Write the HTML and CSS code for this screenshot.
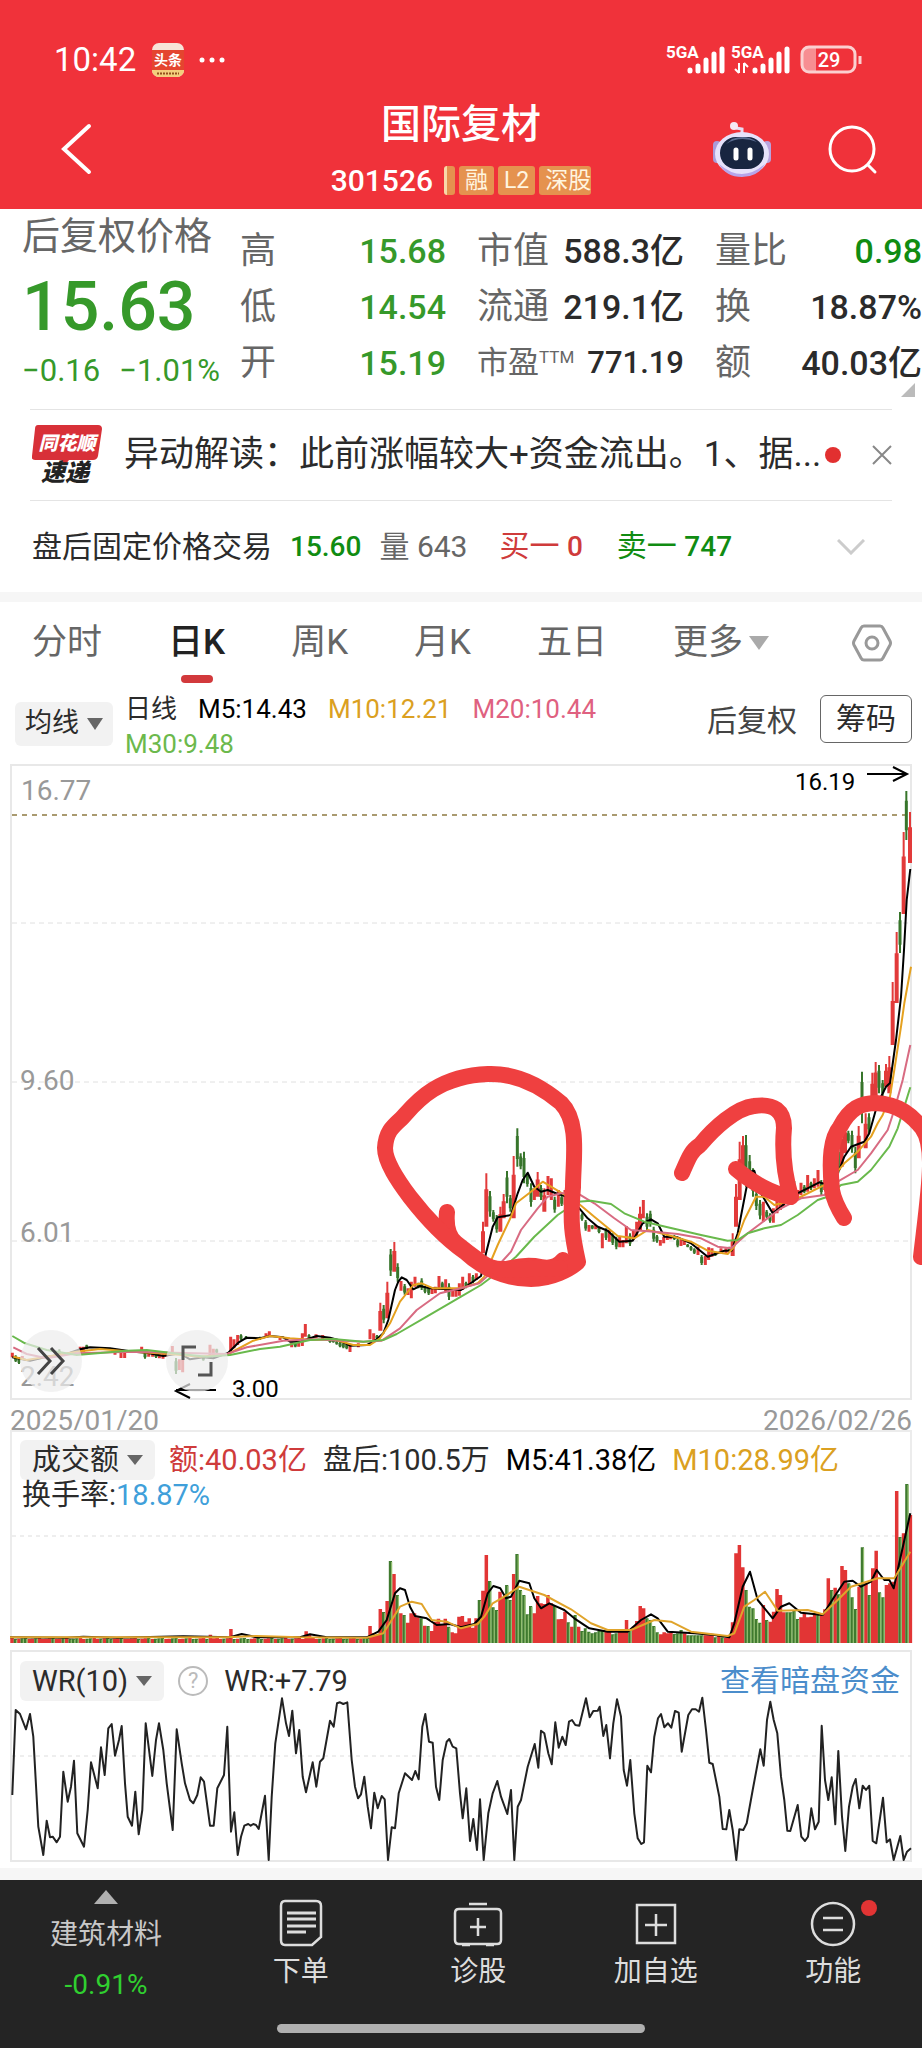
FILE: index.html
```html
<!DOCTYPE html>
<html lang="zh-CN">
<head>
<meta charset="utf-8">
<meta name="viewport" content="width=device-width, initial-scale=1">
<title>国际复材 301526</title>
<link rel="stylesheet" href="styles.css">
</head>
<body>
<header class="top">
  <div class="status">
    <span class="clock">10:42</span>
    <svg class="app-badge" width="32" height="34" viewBox="0 0 32 34"><rect width="32" height="34" rx="7" fill="#f7e4d8"/><rect y="7" width="32" height="20" fill="#e4452f"/><path d="M0 27h32a7 7 0 0 1-7 7H7a7 7 0 0 1-7-7z" fill="#f3cf7c"/><path d="M5 30.500h22" stroke="#94501c" stroke-width="2" stroke-dasharray="2 1"/><text x="16" y="22" text-anchor="middle" font-size="14" font-weight="700" fill="#fff">头条</text></svg>
    <svg width="28" height="8" viewBox="0 0 28 8" fill="#fff"><circle cx="4" cy="4" r="2.500"/><circle cx="14" cy="4" r="2.500"/><circle cx="24" cy="4" r="2.500"/></svg>
    <svg class="signals" width="198" height="34" viewBox="0 0 198 34" fill="#fff">
      <g font-size="17" font-weight="700"><text x="0" y="15">5GA</text><text x="65" y="15">5GA</text></g>
      <g stroke="#fff" stroke-width="5" stroke-linecap="round"><path d="M24 27v1M32 23v5M40 17v11M48 11v17M56 6v22M89 27v1M97 23v5M105 17v11M113 11v17M121 6v22" /></g>
      <path d="M73 20v10M73 30l-4-4M78 30V20M78 20l4 4" fill="none" stroke="#fff" stroke-width="2"/>
      <path d="M142 5h8v24h-8q-6 0-6-6V11q0-6 6-6z" fill="#fff" opacity=".45"/>
      <rect x="136" y="4" width="53" height="25" rx="7" fill="none" stroke="#fbd0d0" stroke-width="3"/><path d="M194 13v8" stroke="#fbd0d0" stroke-width="3"/>
      <text x="163" y="24" text-anchor="middle" font-size="20" font-weight="500">29</text>
    </svg>
  </div>
  <nav class="nav">
    <button class="icon-btn back" aria-label="返回"><svg width="36" height="56" viewBox="0 0 36 56" fill="none" stroke="#fff" stroke-width="4" stroke-linecap="round"><path d="M31 5L6 28l25 23"/></svg></button>
    <div class="title">
      <h1>国际复材</h1>
      <div class="code"><span>301526</span><i class="tag tag-cut"></i><i class="tag">融</i><i class="tag">L2</i><i class="tag">深股</i></div>
    </div>
    <div class="nav-right">
      <button class="icon-btn" aria-label="智能助手"><svg width="60" height="60" viewBox="0 0 60 60"><path d="M30 16v-6l-6-1" fill="none" stroke="#e8dcf2" stroke-width="3"/><circle cx="22" cy="7" r="4" fill="#f5e8f4"/><rect x="1" y="22" width="8" height="22" rx="4" fill="#aa9bd8"/><rect x="51" y="22" width="8" height="22" rx="4" fill="#b9a3de"/><ellipse cx="30" cy="35" rx="27" ry="22" fill="#e6e2fb"/><path d="M7 45q23 20 46 0-7 13-23 13T7 45z" fill="#b7a5ea"/><rect x="8" y="18" width="44" height="32" rx="16" fill="#182540"/><path d="M14 25q14-9 31-2-11-8-25-3z" fill="#5b6d91"/><path d="M24 31v8M38 31v8" stroke="#fff" stroke-width="5" stroke-linecap="round"/></svg></button>
      <button class="icon-btn" aria-label="搜索"><svg width="52" height="52" viewBox="0 0 52 52" fill="none" stroke="#fff" stroke-width="3" stroke-linecap="round"><circle cx="26" cy="26" r="22"/><path d="M42 42l7 7"/></svg></button>
    </div>
  </nav>
</header>

<main>
<section class="quote">
  <div class="price-col">
    <div class="adj">后复权价格</div>
    <div class="price">15.63</div>
    <div class="change"><span>−0.16</span><span>−1.01%</span></div>
  </div>
  <dl class="pairs green"><div><dt>高</dt><dd>15.68</dd></div><div><dt>低</dt><dd>14.54</dd></div><div><dt>开</dt><dd>15.19</dd></div></dl>
  <dl class="pairs"><div><dt>市值</dt><dd>588.3亿</dd></div><div><dt>流通</dt><dd>219.1亿</dd></div><div class="small"><dt>市盈<sup>TTM</sup></dt><dd>771.19</dd></div></dl>
  <dl class="pairs"><div><dt>量比</dt><dd class="bright">0.98</dd></div><div><dt>换</dt><dd>18.87%</dd></div><div><dt>额</dt><dd>40.03亿</dd></div></dl>
  <svg class="corner" width="14" height="14" viewBox="0 0 14 14"><path d="M14 0v14H0z" fill="#bbb"/></svg>
</section>

<section class="news">
  <svg class="brand" width="70" height="64" viewBox="0 0 70 64"><path d="M6 2h60q4 0 4 4l-4 27q-1 4-5 4H37l-4 5-4-5H3q-4 0-3-4L3 6q0-4 3-4z" fill="#d83038"/><g font-weight="900" font-style="italic"><text x="35" y="27" text-anchor="middle" font-size="19" fill="#fff">同花顺</text><text x="33" y="58" text-anchor="middle" font-size="24" fill="#222">速递</text></g></svg>
  <a href="#" class="headline">异动解读：此前涨幅较大+资金流出。1、据...</a>
  <span class="dot"></span>
  <button class="icon-btn close" aria-label="关闭"><svg width="20" height="20" viewBox="0 0 20 20" stroke="#888" stroke-width="2"><path d="M1 1l18 18M19 1L1 19"/></svg></button>
</section>

<section class="after">
  <span>盘后固定价格交易</span><b class="bright">15.60</b><span class="grey">量 643</span><span class="red">买一 <b>0</b></span><span class="bright">卖一 <b>747</b></span>
  <button class="icon-btn expand" aria-label="展开"><svg width="28" height="16" viewBox="0 0 28 16" fill="none" stroke="#ccc" stroke-width="3"><path d="M1 1l13 13L27 1"/></svg></button>
</section>

<div class="tabs" role="tablist">
  <button role="tab">分时</button><button role="tab" class="on" aria-selected="true">日K</button><button role="tab">周K</button><button role="tab">月K</button><button role="tab">五日</button><button role="tab" class="more">更多<svg width="20" height="16" viewBox="0 0 20 16"><path d="M0 1h20L10 15z" fill="#aaa"/></svg></button>
  <button class="gear" aria-label="设置"><svg width="40" height="38" viewBox="0 0 40 38" fill="none" stroke="#999" stroke-width="3"><path d="M12 2h16q2 0 3 2l7 13q1 2 0 4l-7 13q-1 2-3 2H12q-2 0-3-2L2 21q-1-2 0-4L9 4q1-2 3-2z"/><circle cx="20" cy="19" r="6"/></svg></button>
</div>

<div class="ma">
  <button class="pill">均线<svg width="16" height="12" viewBox="0 0 16 12"><path d="M0 0h16L8 12z" fill="#666"/></svg></button>
  <p class="ma-values"><span>日线</span><span class="black">M5:14.43</span><span class="gold">M10:12.21</span><span class="pink">M20:10.44</span><br><span class="lime">M30:9.48</span></p>
  <span class="fq">后复权</span>
  <button class="chip">筹码</button>
</div>

<section class="stack">
  <svg class="chart" id="price" viewBox="0 762 922 642">
    <path d="M11 765H911V1399H11z" fill="none" stroke="#e8e8e8" stroke-width="2"/>
    <path d="M12 923H911M12 1082H911M12 1241H911" stroke="#e0e0e0" stroke-dasharray="5 4"/>
    <path d="M12 815H911" stroke="#a99a70" stroke-width="2" stroke-dasharray="5 5"/>
    <g font-size="28" fill="#999"><text x="21" y="800">16.77</text><text x="20" y="1090">9.60</text><text x="20" y="1242">6.01</text><text x="20" y="1386">2.42</text></g>
    <path id="candle-up" fill="#e23a3a"/><path id="candle-down" fill="#37752b"/>
    <g id="averages" fill="none" stroke-width="2" stroke-linejoin="round"></g>
    <g font-size="24" fill="#000"><text x="795" y="790">16.19</text><text x="232" y="1397">3.00</text></g>
    <g fill="none" stroke="#000" stroke-width="2"><path d="M867 774h40M893 767l14 7-14 7M216 1390h-40M190 1384l-14 7 14 7"/></g>
  </svg>
  <svg class="chart marks" viewBox="0 762 922 642" fill="none" stroke="#ef4040" stroke-width="16" stroke-linecap="round" stroke-linejoin="round">
    <path d="M447 1212Q445 1234 456 1243T481 1262T511 1268T541 1267T563 1260"/>
    <path d="M578 1262C570 1269 552 1279 531 1279C507 1279 483 1269 465 1252C444 1237 427 1219 410 1197C398 1181 385 1162 385 1148C386 1132 392 1127 402 1118C414 1105 435 1076 488 1074C516 1073 542 1087 561 1103C580 1122 573 1160 573 1187C570 1222 572 1235 578 1262z"/>
    <path d="M500 1270L560 1268"/>
    <path d="M682 1173C689 1157 691 1151 700 1145C714 1128 736 1108 754 1106C774 1103 784 1111 784 1128C782 1150 783 1170 791 1197C774 1195 751 1182 736 1169"/>
    <path d="M844 1218Q834 1202 832 1190C829 1158 831 1138 840 1127C850 1108 861 1103 876 1103C900 1104 913 1117 922 1128C936 1147 929 1188 921 1257"/>
  </svg>
  <div class="chart-tools">
    <button aria-label="快进"><svg width="30" height="30" viewBox="0 0 30 30" fill="none" stroke="#444" stroke-width="3"><path d="M2 2l12 13L2 28M15 2l12 13-12 13"/></svg></button>
    <button aria-label="全屏"><svg width="32" height="32" viewBox="0 0 32 32" fill="none" stroke="#555" stroke-width="3"><path d="M2 15V2h13M30 17v13H17"/></svg></button>
  </div>
</section>

<div class="dates"><time>2025/01/20</time><time>2026/02/26</time></div>

<section class="stack">
  <svg class="chart" viewBox="0 1430 922 219">
    <path d="M11 1643V1431H911V1643" fill="none" stroke="#ececec" stroke-width="2"/>
    <path d="M12 1536H911" stroke="#ddd" stroke-dasharray="4 4"/>
    <path id="vol-up" fill="#e23535"/><path id="vol-down" fill="#3f7a2f"/><path id="vol-shine" fill="#92bf70"/>
    <g id="vol-averages" fill="none" stroke-width="2" stroke-linejoin="round"></g>
  </svg>
  <div class="panel-head">
    <button class="pill">成交额<svg width="16" height="10" viewBox="0 0 16 10"><path d="M0 0h16L8 10z" fill="#666"/></svg></button>
    <span class="red">额:40.03亿</span><span>盘后:100.5万</span><span class="black">M5:41.38亿</span><span class="gold">M10:28.99亿</span>
    <p class="turnover">换手率:<span class="blue">18.87%</span></p>
  </div>
</section>

<section class="stack wr">
  <svg class="chart" viewBox="0 1649 922 219">
    <path d="M11 1651H911V1861H11z" fill="none" stroke="#e8e8e8" stroke-width="2"/>
    <path d="M12 1756H911" stroke="#ddd" stroke-dasharray="4 4"/>
    <g id="wr-line" fill="none" stroke-width="2" stroke-linejoin="round"></g>
  </svg>
  <div class="panel-head">
    <button class="pill">WR(10)<svg width="16" height="10" viewBox="0 0 16 10"><path d="M0 0h16L8 10z" fill="#666"/></svg></button>
    <button class="help" aria-label="说明">?</button>
    <span>WR:+7.79</span>
    <a href="#" class="link">查看暗盘资金</a>
  </div>
</section>
</main>

<footer class="bottom">
  <div class="bar">
    <a href="#" class="sector"><svg width="24" height="14" viewBox="0 0 24 14"><path d="M12 0l12 14H0z" fill="#b0b0b0"/></svg><span>建筑材料</span><em>-0.91%</em></a>
    <a href="#"><svg width="50" height="50" viewBox="0 0 50 50" fill="none" stroke="#ddd" stroke-width="2.500"><path d="M9 3h31q5 0 5 5v31l-9 8H9q-4 0-4-5V8q0-5 4-5z"/><path d="M11 15h29M11 21h29M11 28h29M11 34h19" stroke-width="3"/></svg><span>下单</span></a>
    <a href="#"><svg width="50" height="50" viewBox="0 0 50 50" fill="none" stroke="#ddd" stroke-width="2.500"><path d="M16 6h18M6 11h38q4 0 4 4v27q0 4-4 4H6q-4 0-4-4V15q0-4 4-4zM9 47h8M33 47h8M25 20v18M17 29h16"/></svg><span>诊股</span></a>
    <a href="#"><svg width="50" height="50" viewBox="0 0 50 50" fill="none" stroke="#ddd" stroke-width="2.500"><path d="M6 7h38v38H6zM25 16v22M14 27h22"/></svg><span>加自选</span></a>
    <a href="#" class="func"><svg width="50" height="50" viewBox="0 0 50 50" fill="none" stroke="#ddd" stroke-width="2.500"><circle cx="25" cy="26" r="21"/><path d="M15 20h20M15 32h20"/></svg><i class="badge"></i><span>功能</span></a>
  </div>
  <div class="home"></div>
</footer>
<script src="chart.js"></script>
</body>
</html>
```
FILE: styles.css
```css
* { box-sizing: border-box; }
body { margin: 0; background: #fff; color: #2b2b2b; font-family: Roboto, "Noto Sans CJK SC", sans-serif; line-height: 1.3; overflow-x: hidden; }
button { margin: 0; padding: 0; border: 0; background: none; font: inherit; color: inherit; }
a { color: inherit; text-decoration: none; }
h1, p, dl, dd { margin: 0; }
i, em { font-style: normal; }
b { font-weight: 500; }
svg { display: block; flex: none; }
.icon-btn { display: flex; }

.top { background: #f0323a; color: #fff; padding-top: 40px; }
.status { display: flex; align-items: center; height: 40px; padding: 0 58px 0 54px; }
.clock { font-size: 33px; font-weight: 400; line-height: 40px; }
.app-badge { margin: 0 14px 0 16px; }
.signals { margin-left: auto; }
.nav { display: grid; grid-template-columns: 1fr auto 1fr; align-items: center; height: 129px; padding: 8px 44px 0; }
.back { padding-left: 14px; }
.title { padding-top: 8px; text-align: center; }
.title h1 { font-size: 40px; font-weight: 500; line-height: 56px; }
.code { display: flex; justify-content: center; align-items: center; height: 56px; gap: 4px; font-size: 30px; font-weight: 500; }
.code span { margin-right: 7px; }
.tag { background: #e5924f; color: #fff5e0; font-size: 23px; font-weight: 400; line-height: 29px; padding: 0 6px; border-radius: 3px; }
.tag:last-child { padding-right: 0; }
.tag-cut { width: 11px; height: 29px; padding: 0; border-left: 3px solid #f8d9a8; }
.nav-right { display: flex; justify-content: flex-end; align-items: center; gap: 54px; }

.quote { position: relative; display: grid; grid-template-columns: minmax(0, 187fr) minmax(0, 206fr) minmax(0, 207fr) minmax(0, 207fr); column-gap: 31px; height: 200px; padding-left: 22px; white-space: nowrap; }
.price-col { color: #36992a; }
.adj { color: #666; font-size: 38px; line-height: 54px; }
.price { font-size: 68px; font-weight: 500; line-height: 88px; }
.change { display: flex; gap: 19px; font-size: 31px; line-height: 40px; }
.pairs { padding-top: 19px; }
.pairs div { display: flex; justify-content: space-between; align-items: baseline; height: 56px; font-size: 34px; }
.pairs dt { color: #666; font-size: 36px; }
.pairs dd { font-weight: 500; }
.pairs sup { font-size: 17px; line-height: 17px; vertical-align: 10px; }
.pairs .small, .pairs .small dt { font-size: 31px; line-height: 46px; }
.green dd { color: #36992a; }
.bright, .pairs .bright { color: #108c12; }
.grey { color: #666; }
.red { color: #cf3b3b; }
.black { color: #000; }
.gold { color: #dba021; }
.pink { color: #df6180; }
.lime { color: #6cb94c; }
.blue { color: #409fda; }
.corner { position: absolute; right: 7px; bottom: 12px; }

.news, .after { display: flex; align-items: center; margin: 0 30px; border-top: 1px solid #e4e4e4; height: 91px; white-space: nowrap; }
.news { padding-left: 2px; }
.headline { margin-left: 22px; font-size: 35px; }
.dot { width: 16px; height: 16px; margin-left: auto; border-radius: 50%; background: #e23030; }
.close { margin-left: 31px; }
.after { height: 92px; padding-left: 2px; font-size: 30px; line-height: 40px; }
.after > * + * { margin-left: 18px; }
.after b { font-size: 28px; }
.after .red { margin-left: 32px; }
.after .red + .bright { margin-left: 34px; }
.after .expand { margin: 0 27px 0 auto; }

.tabs { display: flex; align-items: center; height: 100px; padding: 0 30px 8px 32px; border-top: 10px solid #f6f6f6; font-size: 35px; color: #666; }
.tabs > button { position: relative; display: flex; align-items: center; line-height: 48px; margin-right: 66px; white-space: nowrap; }
.tabs .more { gap: 6px; }
.tabs .gear { margin: 0 0 0 auto; }
.tabs .on { color: #222; font-weight: 500; }
.on::after { content: ""; position: absolute; left: 50%; bottom: -16px; width: 32px; height: 8px; margin-left: -16px; border-radius: 4px; background: #d2393c; }

.ma { display: flex; align-items: flex-start; height: 70px; padding: 0 10px 0 15px; white-space: nowrap; }
.pill { display: flex; align-items: center; gap: 8px; height: 44px; padding: 0 10px; border-radius: 6px; background: #f2f2f2; font-size: 27px; }
.ma .pill { margin-top: 10px; }
.ma-values { flex: 1; margin-left: 12px; font-size: 26px; line-height: 35px; }
.ma-values span { margin-right: 21px; }
.fq { margin-right: 23px; font-size: 30px; line-height: 58px; color: #444; }
.chip { height: 48px; margin-top: 3px; padding: 0 15px; border: 1px solid #666; border-radius: 6px; font-size: 30px; line-height: 46px; }

.stack { display: grid; }
.stack > * { grid-area: 1 / 1; min-width: 0; }
.chart { width: 100%; height: auto; overflow: visible; }
.marks { z-index: 1; pointer-events: none; }
.chart-tools { z-index: 2; display: flex; align-items: flex-end; align-self: end; gap: 84px; padding: 0 0 12px 20px; }
.chart-tools button { display: flex; align-items: center; justify-content: center; width: 62px; height: 62px; border-radius: 50%; background: rgba(236, 236, 236, .7); }
.dates { display: flex; justify-content: space-between; height: 26px; padding: 0 10px; color: #999; font-size: 28px; line-height: 34px; }

.panel-head { display: flex; flex-wrap: wrap; align-items: center; align-content: flex-start; column-gap: 16px; padding: 10px 22px 0 20px; font-size: 29px; line-height: 40px; white-space: nowrap; }
.panel-head .pill { height: 40px; padding: 0 12px; font-size: 29px; margin-right: -2px; }
.turnover { width: 100%; line-height: 30px; padding-left: 2px; }
.wr .panel-head { padding-top: 12px; }
.help { width: 30px; height: 30px; border: 2px solid #bbb; border-radius: 50%; color: #bbb; font-size: 22px; line-height: 26px; }
.panel-head .link { margin-left: auto; color: #4b8dcb; font-size: 30px; }

main { border-bottom: 12px solid #f6f6f6; }
.bottom { padding-bottom: 15px; background: #242424; color: #ddd; }
.bar { display: flex; height: 144px; font-size: 28px; line-height: 40px; }
.bar a { position: relative; flex: 1; display: flex; flex-direction: column; align-items: center; padding-top: 18px; }
.bar a > span { margin-top: 4px; }
.bar .sector { flex: 0 0 23%; padding-top: 10px; color: #c8c8c8; }
.sector span { padding-top: 7px; }
.sector em { margin-top: 10px; color: #30d030; }
.badge { position: absolute; left: 50%; top: 20px; width: 16px; height: 16px; margin-left: 28px; border-radius: 50%; background: #e23434; }
.home { width: 40%; height: 9px; margin: 0 auto; border-radius: 5px; background: #b0b0b0; }
```
FILE: chart.js
```js
const set = (id, d) => document.getElementById(id).setAttribute('d', d);
const rect = (x, y, w, h) => `M${x} ${y}h${w}v${h}h${-w}z`;

function line(group, color, scaleY, points) {
  const p = document.createElementNS('http://www.w3.org/2000/svg', 'polyline');
  const n = points.trim().split(/[\s,]+/).map(Number);
  const out = [];
  for (let i = 0; i < n.length; i += 2) out.push((n[i] / 3).toFixed(1) + ',' + (scaleY + n[i + 1] / 3).toFixed(1));
  p.setAttribute('points', out.join(' '));
  p.setAttribute('stroke', color);
  document.getElementById(group).appendChild(p);
}

/* Candles: x, high, low, direction, in thirds of a pixel. */
const candles = `37 1058 1072 r 47 1066 1086 g 57 1072 1092 g 67 1068 1080 r 178 1048 1068 g 240 1040 1062 r 250 1040 1056 r 260 1034 1048 g 345 1056 1064 r 363 1054 1074 r 374 1056 1074 r 425 1040 1054 r 435 1056 1076 g 446 1060 1070 r 458 1062 1070 r 468 1060 1074 g 478 1058 1075 r 489 1062 1076 r 499 1062 1070 r 517 1038 1056 r 528 1074 1122 g 538 1078 1110 r 548 1080 1117 r 610 1070 1082 g 630 1034 1076 r 640 1046 1070 r 650 1046 1060 g
692 1010 1055 r 702 1018 1045 r 713 1005 1035 r 723 1003 1020 g 738 1008 1018 g 780 1010 1020 g 798 1000 1012 r 808 994 1008 r 840 1010 1020 r 875 1028 1042 r 886 1028 1042 g 896 1025 1040 r 907 1000 1038 r 916 972 1010 r 927 1003 1018 g 948 1003 1014 r 968 1005 1018 r 990 1017 1028 g 1000 1018 1028 g 1010 1022 1034 g 1020 1026 1042 g 1030 1028 1045 g 1040 1032 1048 g 1050 1035 1056 r 1075 1030 1042 r
1110 988 1018 r 1121 1000 1020 r 1131 1005 1018 g 1141 908 992 r 1151 915 970 g 1162 845 955 r 1172 747 828 g 1183 726 815 r 1193 790 845 g 1203 843 872 r 1214 852 884 g 1224 865 885 r 1234 845 895 r 1245 830 860 r 1255 848 865 g 1265 835 870 g 1275 858 880 g 1286 860 885 g 1296 862 882 r 1306 860 880 r 1317 828 870 r 1327 845 870 g 1337 838 875 r 1347 850 900 g 1358 865 890 r 1368 865 890 r 1378 850 887 r
1388 830 870 r 1398 845 865 g 1408 820 855 r 1419 825 850 g 1429 820 840 r 1449 665 760 r 1459 520 680 r 1470 573 650 g 1480 630 665 g 1490 645 698 g 1501 620 695 r 1511 582 655 r 1521 513 610 g 1531 585 635 g 1541 468 655 r 1552 385 500 g 1562 460 508 g 1572 455 550 g 1582 520 560 g 1593 550 620 g 1603 565 600 r 1613 516 590 r 1623 555 600 g 1633 565 635 r 1644 528 585 r 1654 535 600 r 1664 590 638 g 1675 570 620 r 1685 585 618 g 1695 570 615 r
1746 640 662 g 1757 660 692 g 1767 675 695 r 1777 675 688 g 1787 675 688 r 1797 680 700 g 1807 700 745 r 1818 685 720 g 1828 690 725 r 1838 700 735 g 1849 710 748 g 1859 710 742 r 1869 720 742 r 1879 678 730 r 1890 700 738 g 1900 690 720 r 1910 665 710 r 1920 620 690 r 1930 600 655 r 1941 640 690 g 1951 632 680 g 1961 680 725 g 1971 705 728 g 1981 720 737 r 1991 710 730 r 2002 705 720 r 2012 705 718 r 2023 705 720 g 2033 715 742 g 2043 720 738 r 2053 720 735 r 2063 732 742 g 2073 738 752 g 2083 745 762 g 2094 740 765 r 2105 765 795 g 2116 768 795 r 2126 742 780 r 2136 745 770 r 2146 755 768 g 2163 745 760 r 2178 745 760 r 2188 740 755 g 2198 700 768 r 2208 552 680 r 2219 425 600 r 2229 408 500 r 2238 405 560 g 2249 465 560 g 2259 505 590 g 2269 570 630 g 2280 600 658 g 2290 605 665 r 2300 630 655 g 2310 640 668 g 2320 625 668 r 2331 600 640 r 2341 590 630 r 2351 585 620 r 2362 580 605 g
2383 543 600 g 2393 570 600 r 2403 548 585 r 2413 555 580 g 2423 525 575 r 2433 545 570 g 2443 535 565 r 2454 510 560 r 2464 540 585 g 2474 540 570 r 2515 440 520 g 2525 380 500 r 2535 370 460 r 2545 392 430 g 2556 392 458 g 2566 440 520 g 2576 378 475 r 2586 215 370 g 2597 340 445 r 2607 340 400 g 2617 218 330 r 2627 186 290 r 2637 195 280 g 2648 240 290 g 2658 192 260 r 2668 168 280 r
2678 -54 135 r 2690 -204 9 r 2700 -264 -141 g 2711 -504 -258 r 2719 -627 -480 g 2730 -564 -411 r`.trim().split(/\s+/);
let up = '', down = '';
for (let i = 0; i < candles.length; i += 4) {
  const x = candles[i] / 3, y = 1000 + candles[i + 1] / 3, h = (candles[i + 2] - candles[i + 1]) / 3;
  if (candles[i + 3] === 'r') {
    /* Tall rising days show a wick above the body. */
    up += h > 22 ? rect(x - 1, y, 2, h) + rect(x - 2, y + h * .3, 4, h * .7) : rect(x - 1.5, y, 3, h);
  } else down += rect(x - 1, y, 2, h) + rect(x - 1.5, y + h * .2, 3, h * .6);
}
set('candle-up', up);
set('candle-down', down);

line('averages', '#000', 1000, `37,1072 90,1082 140,1070 200,1062 240,1048 270,1042 330,1045 400,1055 440,1058 490,1068 540,1060 570,1078 610,1072 640,1075 685,1058 715,1028 740,1013 780,1015 810,1008 850,1012 870,1025 900,1025 930,1015 950,1008 990,1013 1015,1020 1050,1037 1100,1035 1130,1018 1150,1000 1165,960 1185,870 1195,845 1205,832 1220,840 1240,868 1260,858 1290,865 1383,870 1443,828 1458,760 1478,680 1493,652 1533,645 1553,580 1568,540 1583,518 1603,560 1623,575 1643,570 1673,582 1703,590 1738,625 1763,655 1793,680 1823,692 1858,725 1898,722 1928,670 1953,658 1973,670 1993,710 2033,712 2073,730 2123,770 2173,752 2195,752 2213,700 2238,570 2250,515 2263,512 2283,580 2318,640 2343,620 2383,585 2433,560 2458,547 2483,555 2518,510 2533,470 2553,440 2593,425 2608,400 2633,310 2658,260 2670,249 2688,120 2703,-9 2712,-150 2720,-300 2731,-393`);
line('averages', '#e5a11f', 1000, `40,1070 80,1080 230,1055 300,1047 400,1055 510,1062 600,1070 685,1062 760,1022 810,1008 870,1015 940,1020 1000,1018 1060,1035 1110,1035 1140,1015 1170,970 1200,905 1240,855 1265,850 1300,865 1383,865 1433,850 1453,830 1493,735 1533,650 1548,610 1593,575 1628,545 1653,560 1683,578 1723,600 1783,650 1853,708 1903,715 1943,690 2003,705 2073,725 2123,752 2183,762 2203,740 2233,660 2268,590 2293,590 2323,615 2383,600 2443,570 2483,550 2533,490 2573,455 2613,410 2633,370 2648,345 2670,290 2683,210 2703,80 2713,10 2733,-100`);
line('averages', '#d86b82', 1000, `40,1042 80,1062 140,1075 230,1060 400,1055 680,1062 740,1042 850,1022 940,1018 1090,1025 1145,1022 1200,985 1250,930 1320,880 1383,865 1438,850 1483,810 1533,755 1563,690 1613,625 1643,590 1683,580 1733,580 1783,610 1843,655 1893,690 1963,695 2033,702 2103,715 2153,740 2193,745 2243,700 2343,625 2403,595 2473,585 2513,545 2573,510 2613,460 2663,390 2683,330 2708,240 2731,135`);
line('averages', '#69b94c', 1000, `37,1008 75,1030 140,1050 230,1065 380,1052 440,1050 540,1062 620,1070 690,1065 780,1047 840,1040 930,1020 1000,1017 1090,1025 1150,1020 1190,1002 1280,950 1383,890 1443,855 1483,825 1548,770 1603,710 1673,645 1733,605 1773,602 1833,612 1873,640 1933,665 2003,682 2103,705 2183,722 2213,720 2243,700 2293,685 2343,675 2393,645 2453,600 2483,590 2523,555 2573,545 2613,510 2668,440 2693,385 2713,320 2731,262`);

/* Turnover tops from the first active day onward, one entry per day. */
const volumes = `678r 700r 705r 627r 636g 603r 483g 522r 585g 640r 645g 668r 640r 640r 652r 655g 677r 678g 693r 665r 656r 672r 656r 680g 697r 700r 650r
648r 665r 655r 683r 655r 600g 572r 465r 543g 622g 630g 575r 590r 555g 600g 522r 462g 570g 585g 643g 618g 640r 588r 610r 612r 585r 610r 618g 658r 657r 635r 667g 680r 645g 680r 693g 685g 695g 700g 697g 693g 692g 692r 695r 703g 700g 690r 690r 660r 690g 680r 663r 618r 625r 655g 660g 678g 697g 703r 697r 700r 697r 702g 700g 690g 700r 706g 706g 706g 706g 706g 706r 706r 706r 712g 708r 712g 713r 708r 667r 460r 435r 502r 570g 620g 625g 657g 668g 615r 660g 665r 635r 567r 585r 637r 637g 637g 632g 657g 652r 640r 652r 650r 640r 645g 645r 628r 535r 570g 563r 583g 498r 510r 550g 592g 627g 560r 442g 548r 585g 505r 452r 577g 592g 555r 550r 545r 273r 411g 400r 252g 345r`.split(/\s+/);
const step = (2731 - 1110) / (volumes.length - 1) / 3;
let vUp = '', vDown = '', shine = '';
const addBar = (x, top, kind) => {
  const y = 1400 + top / 3, h = 1643 - y;
  if (kind === 'r') vUp += rect(x - 1.7, y, 3.5, h);
  else { vDown += rect(x - 1.7, y, 3.2, h); shine += rect(x + .5, y + 1, 1.2, h - 1); }
};
const quiet = 'rgrggrrgrrrrgrrgrgggrrggr';
for (let i = 0; i < 105; i++) {
  const spikes = { 58: 704, 64: 687, 86: 694, 87: 704 };
  addBar(12 + i * step, spikes[i] || 714 + (i * 7) % 4, spikes[i] ? 'r' : quiet[i % quiet.length]);
}
volumes.forEach((v, i) => addBar(370 + i * step, parseInt(v, 10), v.slice(-1)));
set('vol-up', vUp);
set('vol-down', vDown);
set('vol-shine', shine);

line('vol-averages', '#000', 1400, `30,712 200,713 250,710 350,713 550,709 690,712 725,702 770,712 900,712 930,703 980,712 1100,712 1135,695 1160,660 1185,580 1200,565 1215,570 1230,620 1245,648 1280,655 1310,675 1350,672 1383,682 1423,672 1443,650 1463,580 1480,558 1501,565 1518,595 1533,590 1558,542 1588,550 1603,595 1623,625 1648,610 1693,630 1723,655 1768,685 1823,695 1883,695 1923,660 1953,643 1973,655 2003,695 2083,700 2143,705 2188,712 2203,670 2228,560 2250,515 2273,600 2318,655 2343,620 2368,610 2403,638 2468,645 2503,590 2533,545 2558,542 2583,560 2613,545 2630,510 2653,540 2668,540 2681,565 2693,510 2731,340`);
line('vol-averages', '#e0a42b', 1400, `30,712 680,712 770,708 900,712 1100,713 1150,700 1175,660 1200,620 1235,605 1265,612 1295,660 1340,665 1383,685 1433,672 1453,650 1478,610 1513,590 1558,560 1633,585 1713,628 1773,670 1823,690 1893,690 1963,660 2013,665 2073,695 2183,708 2203,700 2233,620 2263,600 2295,575 2333,632 2423,630 2468,643 2513,600 2553,560 2633,535 2683,535 2731,455`);

line('wr-line', '#222', 1640, `37,465 47,210 60,222 78,268 90,222 100,290 115,560 130,645 140,542 150,592 158,590 170,607 180,590 190,395 203,485 213,440 222,362 232,580 252,620 263,510 273,367 293,445 303,322 314,405 325,265 335,252 345,347 357,300 365,258 375,430 383,530 396,557 406,455 416,583 427,510 437,250 457,408 468,300 477,250 490,330 500,430 518,570 530,268 545,370 555,430 570,480 580,490 592,465 602,412 612,425 630,557 641,557 652,445 672,405 682,260 693,575 703,517 713,645 723,590 733,557 745,552 752,557 760,552 768,555 776,567 795,467 806,660 815,470 826,310 846,175 858,250 867,288 877,212 888,340 898,270 908,410 918,457 938,367 949,440 960,365 970,355 990,242 1001,260 1011,190 1020,187 1030,192 1042,187 1055,360 1065,440 1074,475 1083,463 1093,410 1103,500 1113,565 1123,458 1133,505 1145,468 1154,478 1164,660 1175,562 1185,565 1196,460 1215,400 1236,420 1246,393 1256,418 1267,260 1276,222 1287,305 1298,308 1308,440 1318,480 1328,360 1340,305 1348,297 1358,320 1369,325 1380,460 1388,535 1399,445 1410,603 1420,537 1431,630 1440,478 1451,660 1465,520 1478,460 1492,423 1503,470 1522,522 1533,450 1543,660 1553,500 1563,480 1583,380 1604,312 1615,383 1623,272 1633,280 1645,340 1655,373 1666,247 1676,323 1687,290 1697,315 1707,245 1716,240 1726,255 1738,257 1758,175 1769,232 1780,213 1793,212 1799,200 1810,288 1819,255 1830,355 1840,250 1851,178 1863,230 1871,390 1881,437 1891,360 1903,520 1913,595 1924,612 1932,607 1942,377 1953,397 1963,290 1974,235 1983,222 1993,262 2004,250 2014,263 2025,213 2036,218 2045,335 2065,225 2076,208 2087,208 2097,215 2107,173 2118,270 2128,368 2138,372 2158,470 2168,567 2179,568 2188,510 2198,570 2209,660 2218,568 2230,570 2240,550 2258,450 2281,328 2291,377 2301,240 2311,185 2321,240 2332,280 2343,410 2353,480 2362,572 2371,573 2393,495 2404,590 2415,603 2424,590 2434,505 2445,568 2456,545 2465,257 2475,420 2485,480 2495,412 2506,553 2515,333 2526,530 2536,633 2547,500 2558,440 2567,417 2578,505 2588,437 2598,450 2608,437 2618,603 2629,610 2649,473 2660,607 2670,598 2681,660 2701,588 2711,660 2721,635 2733,625`);
```
